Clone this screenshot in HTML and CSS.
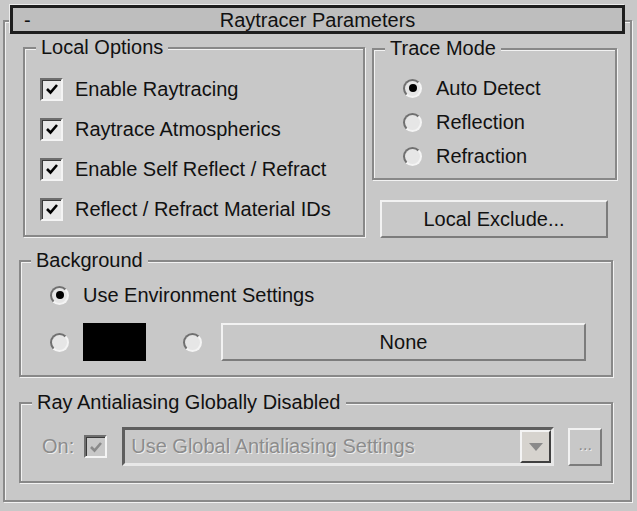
FILE: index.html
```html
<!DOCTYPE html>
<html>
<head>
<meta charset="utf-8">
<link rel="stylesheet" href="styles.css">
</head>
<body>
<div class="frame">
  <div class="header"><span class="minus">-</span><span class="title">Raytracer Parameters</span><span></span></div>
  <div class="top">
    <div class="group local">
      <div class="legend">Local Options</div>
      <div class="row"><span class="check"><svg viewBox="0 0 18 18" width="18" height="18"><polyline points="4,9 7.5,12.5 14,5" fill="none" stroke="#000" stroke-width="2.6"/></svg></span><span>Enable Raytracing</span></div>
      <div class="row"><span class="check"><svg viewBox="0 0 18 18" width="18" height="18"><polyline points="4,9 7.5,12.5 14,5" fill="none" stroke="#000" stroke-width="2.6"/></svg></span><span>Raytrace Atmospherics</span></div>
      <div class="row"><span class="check"><svg viewBox="0 0 18 18" width="18" height="18"><polyline points="4,9 7.5,12.5 14,5" fill="none" stroke="#000" stroke-width="2.6"/></svg></span><span>Enable Self Reflect / Refract</span></div>
      <div class="row"><span class="check"><svg viewBox="0 0 18 18" width="18" height="18"><polyline points="4,9 7.5,12.5 14,5" fill="none" stroke="#000" stroke-width="2.6"/></svg></span><span>Reflect / Refract Material IDs</span></div>
    </div>
    <div class="rightcol">
      <div class="group trace">
        <div class="legend">Trace Mode</div>
        <div class="rrow"><span class="radio on"></span><span>Auto Detect</span></div>
        <div class="rrow"><span class="radio"></span><span>Reflection</span></div>
        <div class="rrow"><span class="radio"></span><span>Refraction</span></div>
      </div>
      <div class="btn exclude">Local Exclude...</div>
    </div>
  </div>
  <div class="group bg">
    <div class="legend">Background</div>
    <div class="bgrow1"><span class="radio on"></span><span>Use Environment Settings</span></div>
    <div class="bgrow2"><span class="radio"></span><span class="swatch"></span><span class="radio r2"></span><div class="btn none">None</div></div>
  </div>
  <div class="group aa">
    <div class="legend">Ray Antialiasing Globally Disabled</div>
    <div class="aarow">
      <span class="dis">On:</span>
      <span class="check discheck"><svg viewBox="0 0 18 18" width="18" height="18"><polyline points="4,9 7.5,12.5 14,5" fill="none" stroke="#8a8a8a" stroke-width="2.6"/></svg></span>
      <div class="combo"><span class="dis">Use Global Antialiasing Settings</span><span class="arrow"><svg viewBox="0 0 14 8" width="14" height="8"><polygon points="0,0 14,0 7,8" fill="#8a8a8a"/></svg></span></div>
      <div class="btn dots dis">...</div>
    </div>
  </div>
</div>
</body>
</html>
```
FILE: styles.css
```css
html, body {
  margin: 0;
  padding: 0;
  background: #c8c8c8;
}
body {
  font-family: "Liberation Sans", Arial, sans-serif;
  font-size: 20px;
  color: #111;
  width: 637px;
  height: 511px;
  overflow: hidden;
}
.frame {
  box-sizing: border-box;
  margin: 20px 0 0 3px;
  width: 629px;
  height: 482px;
  border: 2px solid #8a8a8a;
  box-shadow: 1px 1px 0 #f2f2f2, inset 1px 1px 0 #f2f2f2;
}
.header {
  box-sizing: border-box;
  margin: -17px 0 0 5px;
  width: 615px;
  height: 29px;
  border: 3px solid #1e1e1e;
  background: #bebebe;
  box-shadow: -1px -1px 0 #ececec;
  display: grid;
  grid-template-columns: 1fr auto 1fr;
  align-items: center;
  line-height: 22px;
}
.minus { padding-left: 11px; }
.top {
  display: flex;
  align-items: flex-start;
  margin-top: 13px;
}
.group {
  box-sizing: border-box;
  border: 2px solid #888;
  box-shadow: 1px 1px 0 #f2f2f2, inset 1px 1px 0 #f2f2f2;
}
.legend {
  display: table;
  margin-top: -13px;
  height: 22px;
  line-height: 22px;
  padding: 0 5px;
  background: #c8c8c8;
}
.local {
  margin-left: 18px;
  width: 342px;
  height: 190px;
  padding: 0 0 6px 15px;
}
.local .legend { margin-left: -4px; margin-bottom: 11px; }
.row {
  display: flex;
  align-items: center;
  height: 40px;
  gap: 12px;
}
.check {
  box-sizing: border-box;
  width: 23px;
  height: 23px;
  border: 2px solid;
  border-color: #6e6e6e #f4f4f4 #f4f4f4 #6e6e6e;
  box-shadow: inset 1px 1px 0 #3a3a3a;
  background: #e8e8e8;
  display: flex;
  align-items: center;
  justify-content: center;
  flex: none;
}
.rightcol {
  margin-left: 7px;
  width: 245px;
}
.trace {
  margin-top: 1px;
  height: 132px;
  padding: 0 0 5px 29px;
}
.trace .legend { margin-left: -18px; margin-bottom: 12px; }
.rrow {
  display: flex;
  align-items: center;
  height: 34px;
  gap: 14px;
}
.radio {
  box-sizing: border-box;
  width: 19px;
  height: 19px;
  border-radius: 50%;
  border: 2px solid;
  border-color: #707070 #f4f4f4 #f4f4f4 #707070;
  background: #e6e6e6;
  flex: none;
  display: flex;
  align-items: center;
  justify-content: center;
}
.radio.on::after {
  content: "";
  width: 8px;
  height: 8px;
  border-radius: 50%;
  background: #000;
}
.btn {
  box-sizing: border-box;
  border: 2px solid;
  border-color: #f2f2f2 #7c7c7c #7c7c7c #f2f2f2;
  background: #c8c8c8;
  display: flex;
  align-items: center;
  justify-content: center;
}
.exclude {
  margin: 20px 0 0 8px;
  width: 228px;
  height: 38px;
}
.bg {
  margin: 22px 0 0 14px;
  width: 594px;
  height: 117px;
  padding: 0 0 14px 29px;
}
.bg .legend { margin-left: -19px; margin-bottom: 9px; }
.bgrow1 {
  display: flex;
  align-items: center;
  height: 30px;
  gap: 14px;
}
.bgrow2 {
  display: flex;
  align-items: center;
  height: 38px;
  margin-top: 13px;
}
.swatch {
  width: 63px;
  height: 38px;
  background: #000;
  margin-left: 14px;
}
.r2 { margin-left: 37px; }
.none {
  margin-left: 19px;
  width: 365px;
  height: 38px;
}
.aa {
  margin: 25px 0 0 14px;
  width: 594px;
  height: 81px;
  padding: 0 0 15px 21px;
}
.aa .legend { margin-left: -10px; margin-bottom: 14px; }
.aarow {
  display: flex;
  align-items: center;
  height: 39px;
}
.dis {
  color: #8c8c8c;
  text-shadow: 1px 1px 0 #ececec;
}
.discheck {
  margin-left: 10px;
  background: #c8c8c8;
}
.combo {
  box-sizing: border-box;
  margin-left: 15px;
  width: 432px;
  height: 39px;
  border: 3px solid;
  border-color: #5e5e5e #e8e8e8 #e8e8e8 #5e5e5e;
  background: #c8c8c8;
  display: flex;
  align-items: center;
  justify-content: space-between;
  padding: 0 0 0 6px;
}
.arrow {
  box-sizing: border-box;
  width: 31px;
  height: 33px;
  background: #d6d3ce;
  border: 2px solid;
  border-color: #f4f4f4 #404040 #404040 #f4f4f4;
  display: flex;
  align-items: center;
  justify-content: center;
}
.dots {
  margin-left: 14px;
  width: 34px;
  height: 38px;
  font-size: 16px;
  padding-bottom: 4px;
}
```
